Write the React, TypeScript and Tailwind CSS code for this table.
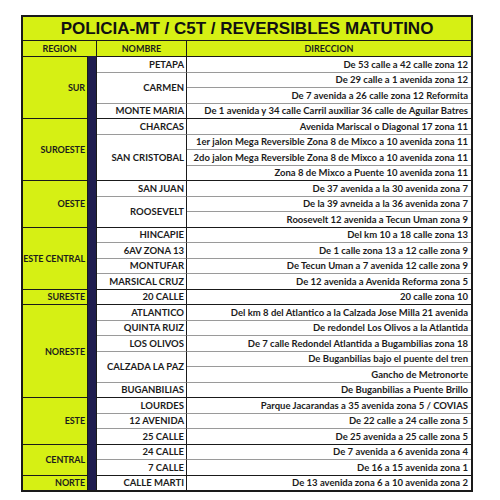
import React from 'react';

// Reversible lanes table (morning shift)
type Item = { name: string; dirs: string[] };
type Group = { region: string; items: Item[] };

const groups: Group[] = [
  {
    region: 'SUR',
    items: [
      { name: 'PETAPA', dirs: ['De 53 calle a 42 calle zona 12'] },
      { name: 'CARMEN', dirs: ['De 29 calle a 1 avenida zona 12', 'De 7 avenida a 26 calle zona 12 Reformita'] },
      { name: 'MONTE MARIA', dirs: ['De 1 avenida y 34 calle Carril auxiliar 36 calle de Aguilar Batres'] },
    ],
  },
  {
    region: 'SUROESTE',
    items: [
      { name: 'CHARCAS', dirs: ['Avenida Mariscal o Diagonal 17 zona 11'] },
      {
        name: 'SAN CRISTOBAL',
        dirs: [
          '1er jalon Mega Reversible Zona 8 de Mixco a 10 avenida zona 11',
          '2do jalon Mega Reversible Zona 8 de Mixco a 10 avenida zona 11',
          'Zona 8 de Mixco a Puente 10 avenida zona 11',
        ],
      },
    ],
  },
  {
    region: 'OESTE',
    items: [
      { name: 'SAN JUAN', dirs: ['De 37 avenida a la 30 avenida zona 7'] },
      { name: 'ROOSEVELT', dirs: ['De la 39 avneida a la 36 avenida zona 7', 'Roosevelt 12 avenida a Tecun Uman zona 9'] },
    ],
  },
  {
    region: 'ESTE CENTRAL',
    items: [
      { name: 'HINCAPIE', dirs: ['Del km 10 a 18 calle zona 13'] },
      { name: '6AV ZONA 13', dirs: ['De 1 calle zona 13 a 12 calle zona 9'] },
      { name: 'MONTUFAR', dirs: ['De Tecun Uman a 7 avenida 12 calle zona 9'] },
      { name: 'MARSICAL CRUZ', dirs: ['De 12 avenida a Avenida Reforma zona 5'] },
    ],
  },
  {
    region: 'SURESTE',
    items: [{ name: '20 CALLE', dirs: ['20 calle zona 10'] }],
  },
  {
    region: 'NORESTE',
    items: [
      { name: 'ATLANTICO', dirs: ['Del km 8 del Atlantico a la Calzada Jose Milla 21 avenida'] },
      { name: 'QUINTA RUIZ', dirs: ['De redondel Los Olivos a la Atlantida'] },
      { name: 'LOS OLIVOS', dirs: ['De 7 calle Redondel Atlantida a Bugambilias zona 18'] },
      { name: 'CALZADA LA PAZ', dirs: ['De Buganbilias bajo el puente del tren', 'Gancho de Metronorte'] },
      { name: 'BUGANBILIAS', dirs: ['De Buganbilias a Puente Brillo'] },
    ],
  },
  {
    region: 'ESTE',
    items: [
      { name: 'LOURDES', dirs: ['Parque Jacarandas a 35 avenida zona 5 / COVIAS'] },
      { name: '12 AVENIDA', dirs: ['De 22 calle a 24 calle zona 5'] },
      { name: '25 CALLE', dirs: ['De 25 avenida a 25 calle zona 5'] },
    ],
  },
  {
    region: 'CENTRAL',
    items: [
      { name: '24 CALLE', dirs: ['De 7 avenida a 6 avenida zona 4'] },
      { name: '7 CALLE', dirs: ['De 16 a 15 avenida zona 1'] },
    ],
  },
  {
    region: 'NORTE',
    items: [{ name: 'CALLE MARTI', dirs: ['De 13 avenida zona 6 a 10 avenida zona 2'] }],
  },
];

function RegionGroup({ group }: { group: Group }) {
  return (
    <div className="flex">
      <div className="w-[65px] shrink-0 bg-[#d6f014] border-t border-r border-[#1a1a1a] flex items-center justify-end pr-[2px] whitespace-nowrap text-[9px] tracking-[-0.1px]">
        {group.region}
      </div>
      <div className="w-[9px] shrink-0 bg-[#1f1d4f] border-r border-[#1a1a1a]" />
      <div className="flex-1 flex flex-col">
        {group.items.map((item, i) => (
          <div key={item.name} className="flex">
            <div
              className={
                'w-[90px] shrink-0 bg-white border-t border-r border-r-[#1a1a1a] flex items-center justify-end pr-[2px] whitespace-nowrap ' +
                (i === 0 ? 'border-t-[#1a1a1a]' : 'border-t-[#9a9a9a]')
              }
            >
              {item.name}
            </div>
            <div className="flex-1 flex flex-col">
              {item.dirs.map((d, j) => (
                <div
                  key={d}
                  className={
                    'h-[15.5px] border-t flex items-center justify-end pr-[3px] whitespace-nowrap ' +
                    (i === 0 && j === 0 ? 'border-[#1a1a1a]' : 'border-[#9a9a9a]')
                  }
                >
                  {d}
                </div>
              ))}
            </div>
          </div>
        ))}
      </div>
    </div>
  );
}

export default function App() {
  return (
    <div className="w-[500px] h-[500px] bg-white pt-[15px] pl-[21px] font-['Lato',sans-serif] font-bold text-[#1c1c1c] text-[9.5px] leading-none">
      <div className="w-[452px] border-2 border-[#1a1a1a]">
        <div className="h-[24px] bg-[#d6f014] flex items-center justify-center font-['Liberation_Sans',Arial,sans-serif] text-[17px] text-[#111] border-b border-[#1a1a1a]">
          POLICIA-MT / C5T / REVERSIBLES MATUTINO
        </div>
        <div className="h-[15px] bg-[#d6f014] flex text-[9px]">
          <div className="w-[74px] border-r border-[#1a1a1a] flex items-center justify-center">REGION</div>
          <div className="w-[90px] border-r border-[#1a1a1a] flex items-center justify-center">NOMBRE</div>
          <div className="flex-1 flex items-center justify-center">DIRECCION</div>
        </div>
        {groups.map((g) => (
          <RegionGroup key={g.region} group={g} />
        ))}
      </div>
    </div>
  );
}
